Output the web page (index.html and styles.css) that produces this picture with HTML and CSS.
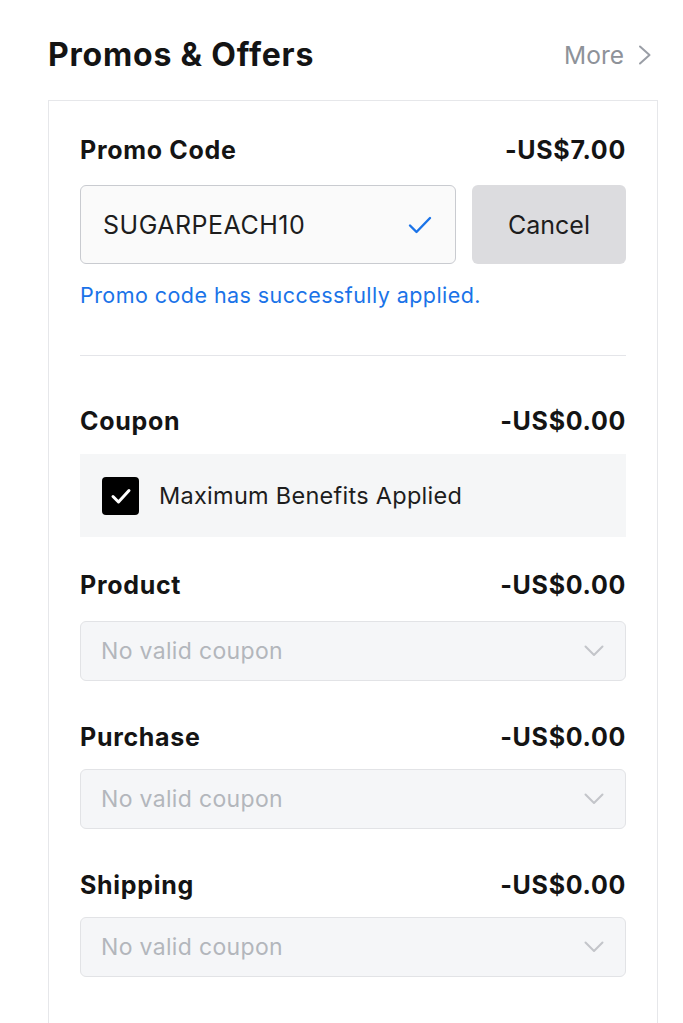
FILE: index.html
```html
<!DOCTYPE html>
<html lang="en">
<head>
<meta charset="utf-8">
<title>Promos &amp; Offers</title>
<link rel="stylesheet" href="styles.css">
</head>
<body>
<main class="page">
  <header class="header">
    <h1 class="title">Promos &amp; Offers</h1>
    <a class="more" href="#"><span>More</span>
      <svg class="more-chev" width="14" height="20" viewBox="0 0 14 20" aria-hidden="true"><path d="M2 1.5 L11.5 10 L2 18.5" fill="none" stroke="#9a9ea6" stroke-width="2" stroke-linecap="round" stroke-linejoin="round"/></svg>
    </a>
  </header>

  <section class="card">
    <div class="row row-promo">
      <span class="label">Promo Code</span>
      <span class="amount">-US$7.00</span>
    </div>
    <div class="code-line">
      <div class="code-input">
        <span class="code-text">SUGARPEACH10</span>
        <svg class="code-check" width="24" height="18" viewBox="0 0 24 18" aria-hidden="true"><path d="M2 9.5 L8.5 16 L22 2" fill="none" stroke="#1a73e8" stroke-width="2.4" stroke-linecap="round" stroke-linejoin="round"/></svg>
      </div>
      <button class="cancel" type="button">Cancel</button>
    </div>
    <p class="success">Promo code has successfully applied.</p>

    <hr class="divider">

    <div class="row row-coupon">
      <span class="label">Coupon</span>
      <span class="amount">-US$0.00</span>
    </div>
    <div class="benefit">
      <span class="checkbox">
        <svg width="22" height="18" viewBox="0 0 22 18" aria-hidden="true"><path d="M3 9.5 L8.5 15 L19 3.5" fill="none" stroke="#fff" stroke-width="3" stroke-linecap="round" stroke-linejoin="round"/></svg>
      </span>
      <span class="benefit-text">Maximum Benefits Applied</span>
    </div>

    <div class="row row-product">
      <span class="label">Product</span>
      <span class="amount">-US$0.00</span>
    </div>
    <div class="select">
      <span class="placeholder">No valid coupon</span>
      <svg class="chev" width="20" height="12" viewBox="0 0 20 12" aria-hidden="true"><path d="M1.5 1.5 L10 10 L18.5 1.5" fill="none" stroke="#c3c5ca" stroke-width="2" stroke-linecap="round" stroke-linejoin="round"/></svg>
    </div>

    <div class="row row-field">
      <span class="label">Purchase</span>
      <span class="amount">-US$0.00</span>
    </div>
    <div class="select">
      <span class="placeholder">No valid coupon</span>
      <svg class="chev" width="20" height="12" viewBox="0 0 20 12" aria-hidden="true"><path d="M1.5 1.5 L10 10 L18.5 1.5" fill="none" stroke="#c3c5ca" stroke-width="2" stroke-linecap="round" stroke-linejoin="round"/></svg>
    </div>

    <div class="row row-field">
      <span class="label">Shipping</span>
      <span class="amount">-US$0.00</span>
    </div>
    <div class="select">
      <span class="placeholder">No valid coupon</span>
      <svg class="chev" width="20" height="12" viewBox="0 0 20 12" aria-hidden="true"><path d="M1.5 1.5 L10 10 L18.5 1.5" fill="none" stroke="#c3c5ca" stroke-width="2" stroke-linecap="round" stroke-linejoin="round"/></svg>
    </div>

    <hr class="divider divider-bottom">
  </section>
</main>
</body>
</html>
```

FILE: styles.css
```css
* { box-sizing: border-box; }

html, body {
  margin: 0;
  padding: 0;
  background: #ffffff;
}

body {
  font-family: Inter, "Noto Sans", "Liberation Sans", sans-serif;
  color: #141414;
  -webkit-font-smoothing: antialiased;
}

.page {
  padding-top: 35px;
}

.header {
  display: flex;
  align-items: center;
  justify-content: space-between;
  height: 40px;
  padding: 0 31px 0 48px;
}

.title {
  margin: 0;
  font-size: 32px;
  font-weight: 700;
  letter-spacing: 0.8px;
  color: #141414;
  line-height: 40px;
}

.more {
  display: flex;
  align-items: center;
  gap: 14px;
  font-size: 24.5px;
  color: #8e9299;
  text-decoration: none;
}

.more-chev { display: block; }

.card {
  margin: 25px 0 0 48px;
  width: 610px;
  border: 1px solid #e6e7ea;
  border-bottom: none;
  padding: 34px 31px 0 31px;
}

.row {
  display: flex;
  align-items: center;
  justify-content: space-between;
  height: 30px;
}

.label,
.amount {
  font-size: 25px;
  font-weight: 700;
  letter-spacing: 0.7px;
  line-height: 30px;
  color: #141414;
}

.code-line {
  display: flex;
  gap: 16px;
  margin-top: 20px;
}

.code-input {
  flex: 1;
  height: 79px;
  display: flex;
  align-items: center;
  justify-content: space-between;
  padding: 0 23px 0 22px;
  background: #fafafa;
  border: 1px solid #c9cbd0;
  border-radius: 6px;
}

.code-text {
  font-size: 25px;
  letter-spacing: 0.5px;
  color: #1d1d1d;
}

.code-check { display: block; }

.cancel {
  width: 154px;
  height: 79px;
  border: none;
  border-radius: 6px;
  background: #dcdcdf;
  font-family: inherit;
  font-size: 25px;
  color: #1d1d1d;
  padding: 0;
}

.success {
  margin: 19px 0 0;
  font-size: 21.5px;
  letter-spacing: 0.44px;
  line-height: 24px;
  color: #1a73e8;
}

.divider {
  margin: 48px 0 0;
  border: none;
  border-top: 1px solid #e4e5e9;
  height: 0;
}

.row-coupon { margin-top: 50px; }

.benefit {
  margin-top: 18px;
  height: 83px;
  display: flex;
  align-items: center;
  gap: 20px;
  padding-left: 22px;
  background: #f5f6f7;
}

.checkbox {
  width: 37px;
  height: 38px;
  border-radius: 4px;
  background: #000000;
  display: flex;
  align-items: center;
  justify-content: center;
}

.checkbox svg { display: block; }

.benefit-text {
  font-size: 23.5px;
  letter-spacing: 0.27px;
  color: #1d1d1d;
}

.row-product { margin-top: 33px; }
.row-product + .select { margin-top: 21px; }

.row-field { margin-top: 41px; }
.row-field + .select { margin-top: 17px; }

.select {
  height: 60px;
  display: flex;
  align-items: center;
  justify-content: space-between;
  padding: 0 21px 0 20px;
  background: #f5f6f8;
  border: 1px solid #e2e3e6;
  border-radius: 6px;
}

.placeholder {
  font-size: 23px;
  letter-spacing: 0.33px;
  color: #b3b6bc;
}

.chev { display: block; }

.divider-bottom { margin-top: 46px; }
```
